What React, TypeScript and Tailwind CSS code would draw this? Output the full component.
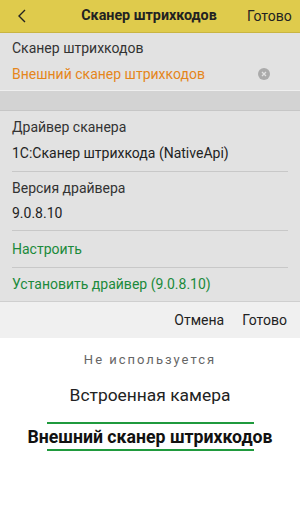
import React from "react";

export default function App() {
  const font = { fontFamily: "Roboto, 'Noto Sans', sans-serif" };
  return (
    <div className="w-[300px] h-[515px] bg-white flex flex-col overflow-hidden" style={font}>
      {/* Header */}
      <div className="h-[33px] bg-[#dfcb4c] border-b border-[#c9b541] flex items-center relative shrink-0">
        <div className="w-[40px] flex items-center pl-[17px]">
          <svg width="9" height="14" viewBox="0 0 9 14" fill="none">
            <path d="M8 1L2 7l6 6" stroke="#222" strokeWidth="1.4" />
          </svg>
        </div>
        <div className="flex-1 text-center text-[14.3px] font-bold text-[#222] pl-[18px]">Сканер штрихкодов</div>
        <div className="w-[60px] text-[14px] text-[#222] pl-[7px]">Готово</div>
      </div>

      {/* Section 1 */}
      <div className="bg-[#e2e2e2] px-3 pt-[5px] pb-[6px] shrink-0 border-b border-[#efefef]">
        <div className="text-[14px] leading-[20px] text-[#333]">Сканер штрихкодов</div>
        <div className="mt-[6px] flex items-center justify-between pr-[18px]">
          <span className="text-[14px] leading-[20px] text-[#e5861b]">Внешний сканер штрихкодов</span>
          <span className="w-[12px] h-[12px] rounded-full bg-[#ababab] flex items-center justify-center">
            <svg width="6" height="6" viewBox="0 0 6 6">
              <path d="M1 1l4 4M5 1L1 5" stroke="#e2e2e2" strokeWidth="1.3" />
            </svg>
          </span>
        </div>
      </div>
      <div className="h-[20px] bg-[#d3d3d3] border-b border-[#c6c6c6] shrink-0" />

      {/* Section 2 */}
      <div className="bg-[#e2e2e2] shrink-0 border-b border-[#cfcfcf]">
        <div className="px-3 pt-[6px] pb-[8px] mx-0">
          <div className="text-[14px] leading-[20px] text-[#333]">Драйвер сканера</div>
          <div className="mt-[6px] text-[14px] leading-[20px] text-[#222]">1С:Сканер штрихкода (NativeApi)</div>
        </div>
        <div className="mx-3 border-t border-[#c8c8c8]" />
        <div className="px-3 pt-[6px] pb-[7px]">
          <div className="text-[14px] leading-[20px] text-[#333]">Версия драйвера</div>
          <div className="mt-[5px] text-[14px] leading-[20px] text-[#222]">9.0.8.10</div>
        </div>
        <div className="mx-3 border-t border-[#c8c8c8]" />
        <div className="px-3 h-[36px] flex items-center text-[14px] text-[#1b8a3b]">Настроить</div>
        <div className="mx-3 border-t border-[#c8c8c8]" />
        <div className="px-3 h-[33px] flex items-center text-[14px] text-[#1b8a3b]">Установить драйвер (9.0.8.10)</div>
      </div>

      {/* Toolbar */}
      <div className="h-[36px] bg-[#f0f0f0] flex items-center justify-end gap-[18px] pr-[13px] shrink-0 text-[14px] text-[#222]">
        <span>Отмена</span>
        <span>Готово</span>
      </div>

      {/* Picker */}
      <div className="flex-1 bg-white flex flex-col items-center">
        <div className="mt-[14px] text-[13px] leading-[16px] tracking-[2px] text-[#666] whitespace-nowrap">Не используется</div>
        <div className="mt-[16px] text-[17.4px] leading-[22px] text-[#222] whitespace-nowrap">Встроенная камера</div>
        <div className="mt-[16px] w-[207px] h-[2px] bg-[#1f9a3d]" />
        <div className="mt-[2px] text-[17.7px] leading-[22px] font-bold text-[#111] whitespace-nowrap">Внешний сканер штрихкодов</div>
        <div className="mt-[1px] w-[207px] h-[2px] bg-[#1f9a3d]" />
      </div>
    </div>
  );
}
